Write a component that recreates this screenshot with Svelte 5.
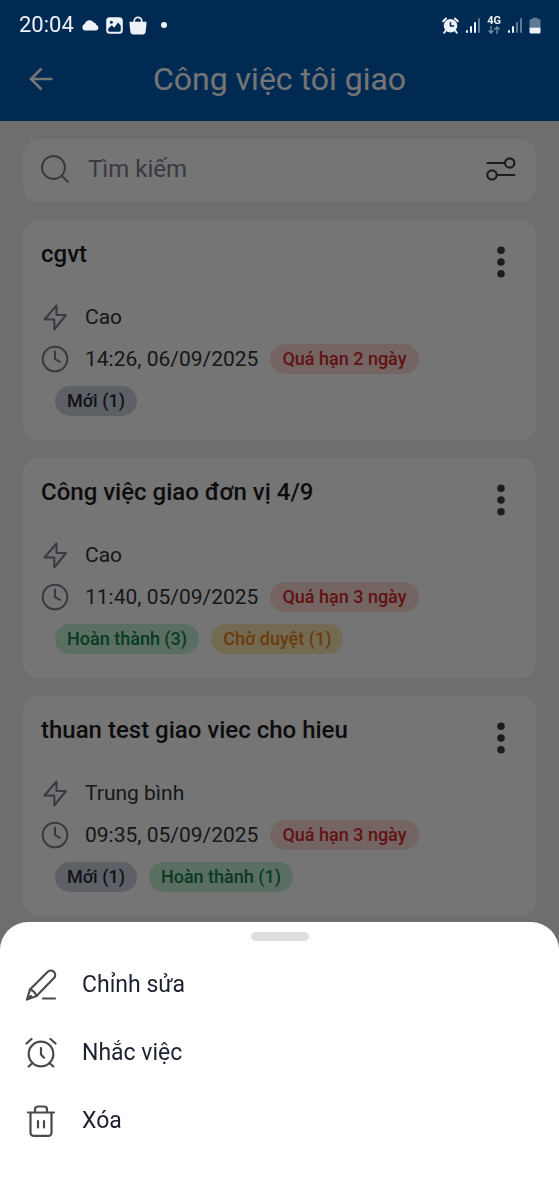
<script>
  const tasks = [
    {
      title: 'cgvt',
      priority: 'Cao',
      due: '14:26, 06/09/2025',
      overdue: 'Quá hạn 2 ngày',
      states: [{ label: 'Mới (1)', tone: 'new' }],
    },
    {
      title: 'Công việc giao đơn vị 4/9',
      priority: 'Cao',
      due: '11:40, 05/09/2025',
      overdue: 'Quá hạn 3 ngày',
      states: [
        { label: 'Hoàn thành (3)', tone: 'done' },
        { label: 'Chờ duyệt (1)', tone: 'waiting' },
      ],
    },
    {
      title: 'thuan test giao viec cho hieu',
      priority: 'Trung bình',
      due: '09:35, 05/09/2025',
      overdue: 'Quá hạn 3 ngày',
      states: [
        { label: 'Mới (1)', tone: 'new' },
        { label: 'Hoàn thành (1)', tone: 'done' },
      ],
    },
  ];

  let query = $state('');
</script>

{#snippet signal(active)}
  <svg width="16" height="17" viewBox="0 0 16 17" fill="currentColor">
    {#each [3, 7, 11, 15] as h, i}
      <rect x={1 + i * 4} y={16 - h} width="2" height={h} rx="1" opacity={i < active ? 1 : 0.4} />
    {/each}
  </svg>
{/snippet}

<div class="page">
  <header class="top">
    <div class="status">
      <span class="time">20:04</span>
      <svg width="19" height="13" viewBox="0 0 20 14" fill="currentColor">
        <path d="M4 12.500a3.800 3.800 0 0 1-.4-7.200A5.500 5.500 0 0 1 13.400 3.800a3.600 3.600 0 0 1 3 2.600 3.200 3.200 0 0 1-.2 6.100z" />
      </svg>
      <svg class="gap-s" width="17" height="17" viewBox="0 0 17 17">
        <rect x="1.200" y="1.200" width="14.600" height="14.600" rx="2.500" fill="none" stroke="currentColor" stroke-width="2" />
        <path d="M1.500 1.500h14v8l-3.500-4-3.800 5.300-2.400-2.500-4.300 4z" fill="currentColor" />
        <circle cx="5.400" cy="5.200" r="1.500" fill="#022b53" />
      </svg>
      <svg class="gap-s" width="18" height="19" viewBox="0 0 17 18">
        <path d="M.5 5.500h16v1.800l-.8 8.200a2.500 2.500 0 0 1-2.500 2H3.800a2.500 2.500 0 0 1-2.500-2L.5 7.300z" fill="currentColor" />
        <path d="M5 7V4.500a3.500 3.200 0 0 1 7 0V7" fill="none" stroke="currentColor" stroke-width="1.600" />
      </svg>
      <span class="dot"></span>
      <div class="status-right">
        <svg width="17" height="17" viewBox="0 0 17 17" fill="none" stroke-linecap="round">
          <circle cx="8.500" cy="8.800" r="6.800" fill="currentColor" />
          <path d="M1.200 4.200 4 1.500M15.800 4.200 13 1.500M3.800 13.500l-1.600 2.300M13.200 13.500l1.600 2.300" stroke="currentColor" stroke-width="2" />
          <path d="M8.500 5.500v3.600h3" stroke="#022b53" stroke-width="1.500" />
        </svg>
        {@render signal(3)}
        <div class="network">
          <span>4G</span>
          <svg width="12" height="8" viewBox="0 0 12 8" fill="none" stroke="currentColor" stroke-width="1.300" opacity="0.5">
            <path d="M3 0v7M.5 4.500 3 7l2.500-2.500M9 8V1M6.500 3.500 9 1l2.500 2.500" />
          </svg>
        </div>
        {@render signal(2)}
        <svg width="12" height="17" viewBox="0 0 12 17" fill="currentColor">
          <path d="M3.500 2V.8h5V2H10a1.500 1.500 0 0 1 1.500 1.500V10.500H.5V3.500A1.500 1.500 0 0 1 2 2z" opacity="0.4" />
          <path d="M.5 10.500h11V15a1.500 1.500 0 0 1-1.500 1.500H2A1.500 1.500 0 0 1 .5 15z" />
        </svg>
      </div>
    </div>
    <div class="bar">
      <button class="back" aria-label="Quay lại">
        <svg width="24" height="24" viewBox="0 0 24 24" fill="none" stroke="currentColor" stroke-width="2.600">
          <path d="M23.500 12H2M12.500 1.500 2 12l10.500 10.500" />
        </svg>
      </button>
      <h1>Công việc tôi giao</h1>
    </div>
  </header>

  <main>
    <div class="search">
      <svg width="28" height="28" viewBox="0 0 28 28" fill="none" stroke="currentColor" stroke-width="2" stroke-linecap="round">
        <circle cx="12.500" cy="12.500" r="11.500" />
        <path d="m20.800 20.800 6 6" />
      </svg>
      <input type="text" placeholder="Tìm kiếm" aria-label="Tìm kiếm" bind:value={query} />
      <button class="filter" aria-label="Bộ lọc">
        <svg width="30" height="24" viewBox="0 0 30 24" fill="none" stroke="currentColor" stroke-width="2.200" stroke-linecap="round">
          <circle cx="23.700" cy="6" r="4.700" />
          <circle cx="6" cy="18" r="4.700" />
          <path d="M1.500 6H19M11 18h17.500" />
        </svg>
      </button>
    </div>

    {#each tasks as task}
      <article class="card">
        <div class="card-head">
          <h2>{task.title}</h2>
          <button class="more" aria-label="Tùy chọn">
            <svg width="8" height="32" viewBox="0 0 8 32" fill="currentColor">
              <circle cx="4" cy="4.300" r="3.800" />
              <circle cx="4" cy="16" r="3.800" />
              <circle cx="4" cy="27.700" r="3.800" />
            </svg>
          </button>
        </div>
        <div class="row">
          <svg width="28" height="28" viewBox="0 0 28 28" fill="none" stroke="currentColor" stroke-width="2" stroke-linejoin="round">
            <path d="M15.500 2.500 3.500 16.500h9.800V26.500L25 12h-9.500z" />
          </svg>
          <span>{task.priority}</span>
        </div>
        <div class="row">
          <svg width="28" height="28" viewBox="0 0 28 28" fill="none" stroke="currentColor" stroke-width="2" stroke-linecap="round">
            <circle cx="14" cy="14" r="12.300" />
            <path d="M14 6.500V14.200l5 2.600" />
          </svg>
          <span>{task.due}</span>
          <span class="badge overdue">{task.overdue}</span>
        </div>
        <div class="states">
          {#each task.states as state}
            <span class="badge {state.tone}">{state.label}</span>
          {/each}
        </div>
      </article>
    {/each}
  </main>

  <div class="scrim"></div>

  <div class="sheet" role="dialog" aria-label="Tùy chọn">
    <div class="handle"></div>
    <button class="action">
      <svg width="32" height="32" viewBox="0 0 32 32" fill="none" stroke="currentColor" stroke-width="2.200" stroke-linecap="round" stroke-linejoin="round">
        <path d="M2 30.500 5 20.500 22.500 3a4.400 4.400 0 0 1 6.700 5.700L11.500 27z" />
        <path d="M5 20.500c2.500.8 5.500 3.300 6.500 6.500M2.500 30l3.500-3M18 29.500h12" />
      </svg>
      Chỉnh sửa
    </button>
    <button class="action">
      <svg width="32" height="32" viewBox="0 0 32 32" fill="none" stroke="currentColor" stroke-width="2.200" stroke-linecap="round" stroke-linejoin="round">
        <circle cx="16" cy="17" r="12.300" />
        <path d="M16 11v6.500l3 3.200M1.500 6.500 6.500 2M30.500 6.500l-5-4.500M7.500 26l-3.800 3.500M24.500 26l3.800 3.500" />
      </svg>
      Nhắc việc
    </button>
    <button class="action">
      <svg width="32" height="32" viewBox="0 0 32 32" fill="none" stroke="currentColor" stroke-width="2.200" stroke-linecap="round" stroke-linejoin="round">
        <path d="M3 7.500h26M5.500 7.500v20.300a3 3 0 0 0 3 3h15a3 3 0 0 0 3-3V7.500M10 7V4.500a3 3 0 0 1 3-3h6a3 3 0 0 1 3 3V7M13 16v6.500M19 16v6.500" />
      </svg>
      Xóa
    </button>
  </div>
</div>

<style>
  :global(body) {
    margin: 0;
    background: #f0f0f1;
  }

  .page {
    min-height: 100vh;
    font-family: Roboto, 'Noto Sans', sans-serif;
    color: #333336;
  }

  svg {
    display: block;
    flex: none;
  }

  button {
    padding: 0;
    border: none;
    background: none;
    font: inherit;
    color: inherit;
    cursor: pointer;
  }

  .top {
    background: #045db5;
  }

  /* stays undimmed above the scrim */
  .status {
    position: relative;
    z-index: 2;
    display: flex;
    align-items: center;
    height: 50px;
    padding: 0 18px 0 19px;
    color: #edf2f9;
  }

  .time {
    margin-right: 7px;
    font-size: 22px;
    line-height: 26px;
  }

  .gap-s {
    margin-left: 6px;
  }

  .dot {
    width: 6px;
    height: 6px;
    margin-left: 14px;
    border-radius: 50%;
    background: currentColor;
  }

  .status-right {
    display: flex;
    align-items: center;
    gap: 6px;
    margin-left: auto;
  }

  .network {
    display: flex;
    flex-direction: column;
    align-items: center;
    font-size: 11px;
    font-weight: 700;
    line-height: 10px;
  }

  .bar {
    display: grid;
    grid-template-columns: 48px 1fr 48px;
    align-items: center;
    height: 58px;
    padding: 0 17px 13px;
    color: #fff;
  }

  .back {
    display: flex;
    justify-content: center;
  }

  h1 {
    margin: 0;
    font-size: 32px;
    font-weight: 400;
    line-height: 40px;
    text-align: center;
  }

  main {
    display: flex;
    flex-direction: column;
    gap: 18px;
    padding: 18px 23px;
  }

  .search {
    display: flex;
    align-items: center;
    gap: 19px;
    height: 60px;
    padding: 0 20px 3px 18px;
    border-radius: 16px;
    background: #fff;
    color: #7c7d92;
  }

  input {
    flex: 1;
    min-width: 0;
    padding: 0;
    border: none;
    outline: none;
    background: none;
    font: inherit;
    font-size: 24px;
    line-height: 32px;
    color: #333336;
  }

  input::placeholder {
    color: #7c7d92;
    opacity: 1;
  }

  .filter,
  .more {
    color: #3f3f44;
  }

  .card {
    display: flex;
    flex-direction: column;
    gap: 12px;
    padding: 18px 18px 24px;
    border-radius: 16px;
    background: #fff;
  }

  .card-head {
    display: flex;
    justify-content: space-between;
    margin-bottom: 4px;
  }

  h2 {
    margin: 0;
    font-size: 24px;
    font-weight: 500;
    line-height: 32px;
    color: #1c1c1e;
  }

  .more {
    display: flex;
    align-items: center;
    justify-content: center;
    width: 35px;
    height: 48px;
  }

  .row {
    display: flex;
    align-items: center;
    height: 30px;
    font-size: 21px;
    line-height: 28px;
  }

  .row svg {
    margin-right: 16px;
    color: #7c7d92;
  }

  .row .badge {
    margin-left: 12px;
  }

  .states {
    display: flex;
    gap: 12px;
    padding-left: 14px;
  }

  .badge {
    padding: 0 12px;
    border-radius: 15px;
    font-size: 18px;
    font-weight: 500;
    line-height: 30px;
  }

  .overdue {
    background: #fddcd8;
    color: #d42a2a;
  }

  .new {
    background: #cbd2dd;
    color: #252b38;
  }

  .done {
    background: #c6efd5;
    color: #108050;
  }

  .waiting {
    background: #fbe6b4;
    color: #e9821a;
  }

  .scrim {
    position: fixed;
    inset: 0;
    z-index: 1;
    background: rgba(0, 0, 0, 0.54);
  }

  .sheet {
    position: fixed;
    right: 0;
    bottom: 0;
    left: 0;
    z-index: 3;
    display: flex;
    flex-direction: column;
    padding: 10px 0 45px;
    border-radius: 28px 28px 0 0;
    background: #fff;
  }

  .handle {
    width: 58px;
    height: 9px;
    margin: 0 auto 10px;
    border-radius: 5px;
    background: #dfdfdf;
  }

  .action {
    display: flex;
    align-items: center;
    gap: 25px;
    height: 68px;
    padding: 0 25px;
    font-size: 23px;
    line-height: 32px;
    color: #1c2130;
  }

  .action svg {
    color: #4a4a4d;
  }
</style>
